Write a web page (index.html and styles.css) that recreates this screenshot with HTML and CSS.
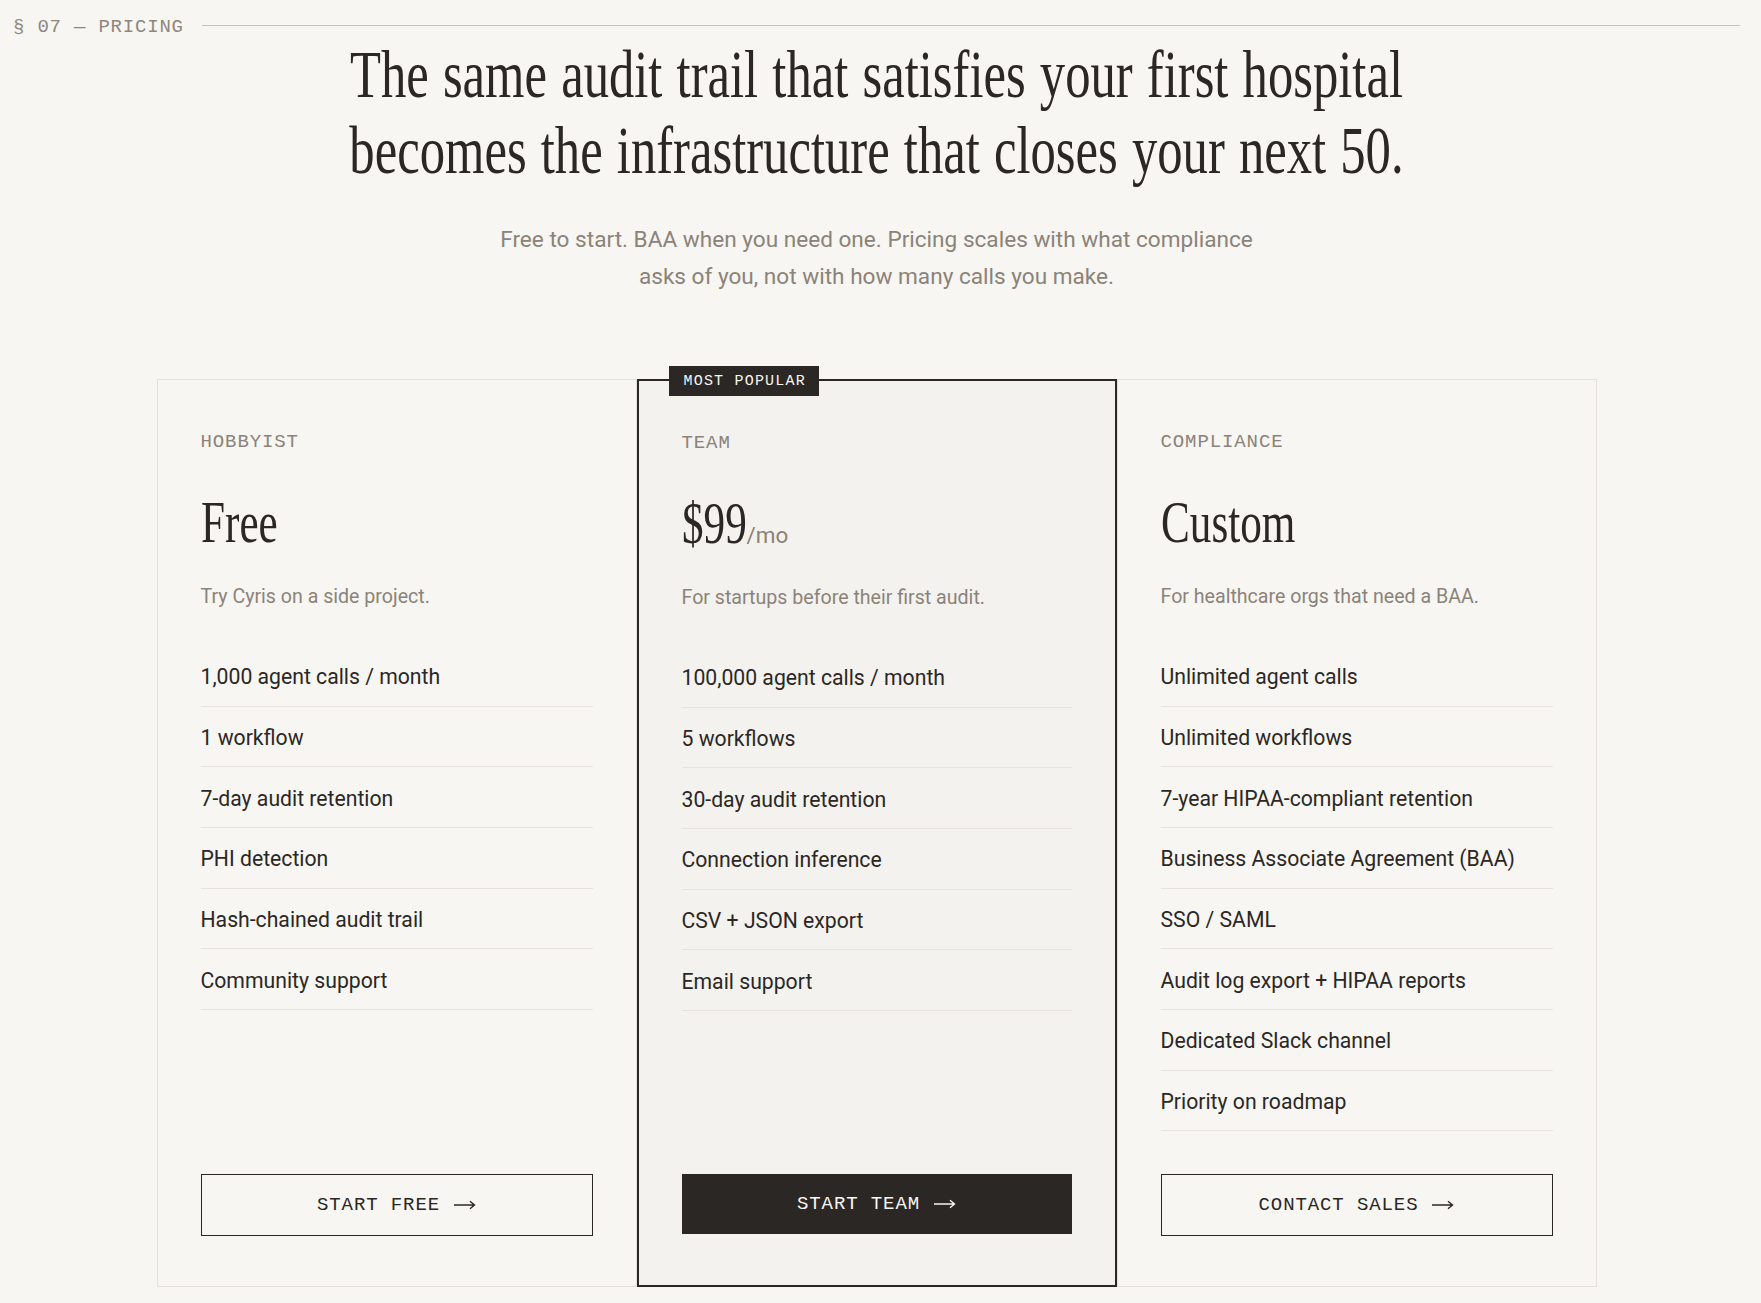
FILE: index.html
```html
<!DOCTYPE html>
<html lang="en">
<head>
<meta charset="utf-8">
<title>Pricing</title>
<link rel="stylesheet" href="styles.css">
</head>
<body>
<main class="page">
  <div class="eyebrow">
    <span class="eyebrow-label">§ 07 — PRICING</span>
    <span class="eyebrow-rule"></span>
  </div>

  <h2 class="headline">The same audit trail that satisfies your first hospital<br>becomes the infrastructure that closes your next 50.</h2>

  <p class="lede">Free to start. BAA when you need one. Pricing scales with what compliance<br>asks of you, not with how many calls you make.</p>

  <div class="plans">
    <article class="plan">
      <h3 class="plan-name">HOBBYIST</h3>
      <div class="price"><span class="amount">Free</span></div>
      <p class="plan-desc">Try Cyris on a side project.</p>
      <ul class="features">
        <li>1,000 agent calls / month</li>
        <li>1 workflow</li>
        <li>7-day audit retention</li>
        <li>PHI detection</li>
        <li>Hash-chained audit trail</li>
        <li>Community support</li>
      </ul>
      <a class="btn btn-ghost" href="#">START FREE <svg class="arrow" viewBox="0 0 22 10" width="22" height="10"><path d="M0 5H20.5M16 1.2L20.5 5L16 8.8"/></svg></a>
    </article>

    <article class="plan plan-featured">
      <span class="badge">MOST POPULAR</span>
      <h3 class="plan-name">TEAM</h3>
      <div class="price"><span class="amount amount-tight">$99</span><span class="per">/mo</span></div>
      <p class="plan-desc">For startups before their first audit.</p>
      <ul class="features">
        <li>100,000 agent calls / month</li>
        <li>5 workflows</li>
        <li>30-day audit retention</li>
        <li>Connection inference</li>
        <li>CSV + JSON export</li>
        <li>Email support</li>
      </ul>
      <a class="btn btn-solid" href="#">START TEAM <svg class="arrow" viewBox="0 0 22 10" width="22" height="10"><path d="M0 5H20.5M16 1.2L20.5 5L16 8.8"/></svg></a>
    </article>

    <article class="plan">
      <h3 class="plan-name">COMPLIANCE</h3>
      <div class="price"><span class="amount">Custom</span></div>
      <p class="plan-desc">For healthcare orgs that need a BAA.</p>
      <ul class="features">
        <li>Unlimited agent calls</li>
        <li>Unlimited workflows</li>
        <li>7-year HIPAA-compliant retention</li>
        <li>Business Associate Agreement (BAA)</li>
        <li>SSO / SAML</li>
        <li>Audit log export + HIPAA reports</li>
        <li>Dedicated Slack channel</li>
        <li>Priority on roadmap</li>
      </ul>
      <a class="btn btn-ghost" href="#">CONTACT SALES <svg class="arrow" viewBox="0 0 22 10" width="22" height="10"><path d="M0 5H20.5M16 1.2L20.5 5L16 8.8"/></svg></a>
    </article>
  </div>
</main>
</body>
</html>
```

FILE: styles.css
```css
* { box-sizing: border-box; }

html, body {
  margin: 0;
  background: #f7f6f2;
}

body {
  padding: 18px 21px 0 13px;
  color: #2b2724;
  font-family: Roboto, "Noto Sans", sans-serif;
}

.page {
  display: flex;
  flex-direction: column;
}

/* eyebrow */
.eyebrow {
  display: flex;
  gap: 18px;
}

.eyebrow-label {
  font-family: "Liberation Mono", "DejaVu Sans Mono", monospace;
  font-size: 19px;
  line-height: 18px;
  letter-spacing: 0.8px;
  color: #8f877d;
  white-space: nowrap;
}

.eyebrow-rule {
  flex: 1;
  height: 1px;
  margin-top: 7px;
  background: #c9c3ba;
}

/* headline */
.headline {
  margin: 0;
  font-family: "Liberation Serif", "Times New Roman", serif;
  font-weight: 400;
  font-size: 68px;
  line-height: 76px;
  word-spacing: 2px;
  text-align: center;
  white-space: nowrap;
  color: #2b2724;
  transform: scaleX(0.745);
  transform-origin: 50% 50%;
}

.lede {
  margin: 34px 0 0;
  font-size: 22.6px;
  line-height: 36.5px;
  text-align: center;
  color: #8b8379;
}

/* plans */
.plans {
  display: grid;
  grid-template-columns: repeat(3, 480px);
  width: 1440px;
  margin: 84px auto 0;
}

.plan {
  position: relative;
  display: flex;
  flex-direction: column;
  border: 1px solid #e4e1db;
  padding: 51px 43px 50px;
  background: #f7f6f2;
}

.plan-featured {
  border: 2px solid #2b2724;
  background: #f3f2ee;
}

.badge {
  position: absolute;
  top: -15px;
  left: 30px;
  height: 30px;
  padding: 0 13px 0 15px;
  display: flex;
  align-items: center;
  background: #2b2724;
  color: #f7f6f2;
  font-family: "Liberation Mono", "DejaVu Sans Mono", monospace;
  font-size: 15px;
  letter-spacing: 1.2px;
  white-space: nowrap;
}

.plan-name {
  margin: 0;
  font-family: "Liberation Mono", "DejaVu Sans Mono", monospace;
  font-weight: 400;
  font-size: 19px;
  line-height: 23px;
  letter-spacing: 0.9px;
  color: #8b8379;
}

.price {
  margin-top: 35px;
  height: 66px;
  font-family: "Liberation Serif", "Times New Roman", serif;
  font-size: 60px;
  line-height: 66px;
  white-space: nowrap;
  color: #2b2724;
}

.amount {
  display: inline-block;
  transform: scaleX(0.72);
  transform-origin: 0 50%;
}

.amount-tight {
  margin-right: -25px;
}

.per {
  font-family: Roboto, "Noto Sans", sans-serif;
  font-size: 22.5px;
  line-height: 1;
  color: #8b8379;
}

.plan-desc {
  margin: 28px 0 0;
  font-size: 19.6px;
  line-height: 28px;
  color: #8b8379;
}

.features {
  flex: 1;
  list-style: none;
  margin: 35px 0 43px;
  padding: 0;
}

.features li {
  padding: 18.2px 0 15.7px;
  font-size: 21.2px;
  line-height: 25.8px;
  border-bottom: 1px solid #e6e3dd;
  color: #2b2724;
}

/* buttons */
.btn {
  display: flex;
  align-items: center;
  justify-content: center;
  gap: 14px;
  height: 62px;
  border: 1px solid #2b2724;
  font-family: "Liberation Mono", "DejaVu Sans Mono", monospace;
  font-size: 19px;
  letter-spacing: 0.9px;
  text-decoration: none;
  white-space: nowrap;
}

.btn-ghost {
  background: transparent;
  color: #2b2724;
}

.btn-solid {
  height: 60px;
  margin-bottom: 1px;
  background: #2b2724;
  color: #f7f6f2;
}

.arrow {
  flex: none;
  fill: none;
  stroke: currentColor;
  stroke-width: 1.4;
}
```
